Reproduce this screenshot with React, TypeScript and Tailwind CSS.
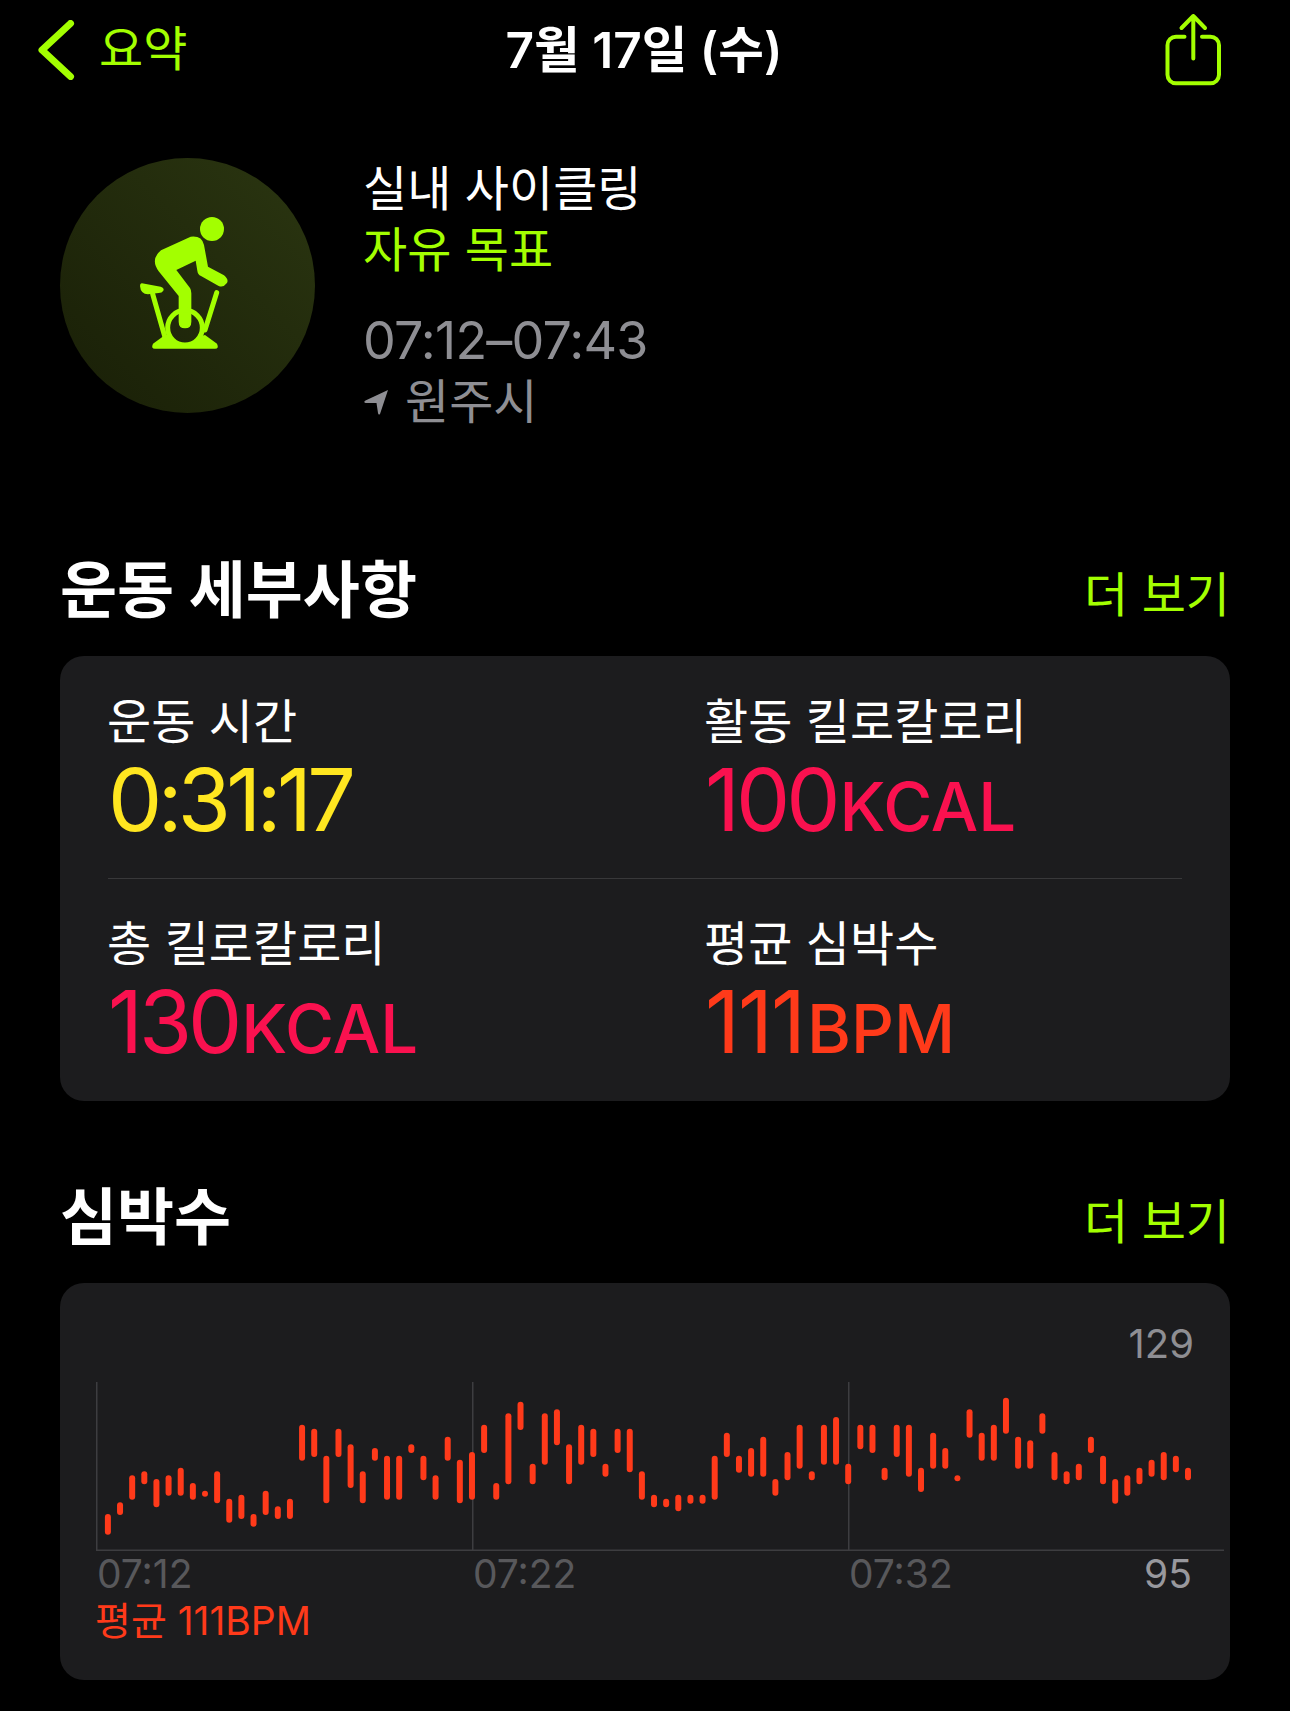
const FONT = 'font-["Inter","Noto_Sans_CJK_KR",sans-serif]';

// Heart-rate range per sample: [top, bottom] in thirds of a pixel, measured from y = 6px above the plot.
const samples: [number, number][] = [
  [402,464],[367,405],[286,359],[274,313],[297,382],[286,347],[263,347],[309,359],[332,347],[274,370],
  [356,428],[344,417],[402,440],[332,405],[379,417],[356,417],[134,242],[146,231],[227,370],[146,231],
  [193,324],[274,370],[204,242],[227,359],[227,359],[193,219],[227,301],[286,359],[170,242],[239,370],
  [216,359],[134,219],[309,359],[100,313],[65,150],[251,313],[100,254],[88,196],[193,313],[134,254],
  [146,231],[251,290],[146,219],[146,277],[274,359],[344,382],[356,382],[344,394],[344,371],[344,371],
  [227,359],[158,231],[227,278],[204,290],[170,290],[297,347],[216,301],[134,266],[274,301],[134,254],
  [111,254],[251,313],[134,208],[134,219],[263,301],[134,231],[134,290],[263,336],[158,266],[204,266],
  [286,301],[88,173],[158,242],[134,242],[53,161],[170,266],[181,266],[100,161],[216,301],[274,313],
  [251,301],[170,219],[227,313],[297,371],[286,347],[263,313],[239,290],[216,301],[227,277],[263,301],
];

function BackChevron() {
  return (
    <svg width="40" height="60" viewBox="0 0 40 60" fill="none" className="shrink-0">
      <path d="M33.5 3.5 L5 30 L33.5 56.5" stroke="#a3ff00" strokeWidth="7" strokeLinecap="round" strokeLinejoin="round" />
    </svg>
  );
}

function ShareIcon() {
  return (
    <svg width="60" height="80" viewBox="0 0 60 80" fill="none" className="shrink-0">
      <path d="M21.5 26.7 H13 a8.5 8.5 0 0 0 -8.5 8.5 V64.8 a8.5 8.5 0 0 0 8.5 8.5 H47.5 a8.5 8.5 0 0 0 8.5 -8.5 V35.2 a8.5 8.5 0 0 0 -8.5 -8.5 H39" stroke="#a3ff00" strokeWidth="4" strokeLinecap="round" />
      <path d="M30.3 48.5 V6 M18.5 18 L30.3 6 L42 18" stroke="#a3ff00" strokeWidth="4" strokeLinecap="round" strokeLinejoin="round" />
    </svg>
  );
}

function CyclistIcon() {
  return (
    <svg width="135" height="171" viewBox="0 0 405 513" fill="#a3ff00">
      <circle cx="276" cy="87" r="36" />
      <path d="M212 110 Q246 106 252 135 L264 200 L312 226 Q328 240 320 250 Q310 264 296 258 L243 228 Q233 223 232 212 L227 182 L169 210 L210 264 Q214 270 214 280 V365 Q214 385 195 385 Q176 385 176 365 V288 L116 214 Q90 178 123 151 Z" />
      <path d="M66 250 L122 260 Q134 264 130 272 Q126 279 116 279 L84 283 Q62 282 60 258 Q60 249 66 250 Z" />
      <path d="M98 282 L135 412 M290 278 L255 390" stroke="#a3ff00" strokeWidth="15" strokeLinecap="round" fill="none" />
      <circle cx="195" cy="383" r="52" stroke="#a3ff00" strokeWidth="15" fill="none" />
      <path d="M99 431 L135 405 L150 409 A52 52 0 0 0 240 409 L255 405 L291 431 Q298 446 285 446 H105 Q92 446 99 431 Z" />
    </svg>
  );
}

function LocationArrow() {
  return (
    <svg width="24" height="25" viewBox="0 0 24 25" fill="#8e8e93" className="shrink-0">
      <path d="M24 0 L16 24 Q14.5 25.5 14 23 L12.5 13 L1.5 13 Q-1 12 1.5 10.5 Z" />
    </svg>
  );
}

function Metric({ label, value, unit, color, tracking }: { label: string; value: string; unit?: string; color: string; tracking: string }) {
  return (
    <div className="flex flex-col">
      <div className="text-[48px] leading-[60px] text-white -ml-[1px]">{label}</div>
      <div className={`flex items-baseline mt-[3px] leading-[90px] ${color}`}>
        <span className={`text-[86px] ${tracking}`}>{value}</span>
        {unit && <span className="text-[67px] font-medium ml-[3px]">{unit}</span>}
      </div>
    </div>
  );
}

function SectionHeading({ title }: { title: string }) {
  return (
    <div className="flex items-center justify-between">
      <h2 className="text-[62px] leading-[80px] font-bold text-white">{title}</h2>
      <span className="text-[48px] leading-[80px] text-[#a3ff00] mt-[8px]">더 보기</span>
    </div>
  );
}

function HeartRateChart() {
  return (
    <svg width="1128" height="170" viewBox="0 0 1128 170" className="block">
      <path d="M0.75 0 V168 M376.75 0 V168 M752.75 0 V168 M0 168.25 H1128" stroke="#3d3d40" strokeWidth="1.5" fill="none" />
      {samples.map(([top, bottom], i) => {
        const y = top / 3 - 2;
        const h = Math.max((bottom - top) / 3, 6);
        return <rect key={i} x={8.9 + i * 12.136} y={y} width="6" height={h} rx="3" fill="#ff3a1a" />;
      })}
    </svg>
  );
}

export default function App() {
  return (
    <div className={`${FONT} w-[1290px] h-[1711px] bg-black overflow-hidden text-white`}>
      <nav className="h-[100px] flex items-center justify-between pl-[37px] pr-[67px]">
        <div className="flex items-center w-[228px] gap-[22px]">
          <BackChevron />
          <span className="text-[48px] leading-[60px] text-[#a3ff00] -mt-[2px]">요약</span>
        </div>
        <h1 className="text-[49.6px] leading-[60px] font-semibold">7월 17일 (수)</h1>
        <div className="w-[200px] flex justify-end">
          <ShareIcon />
        </div>
      </nav>

      <section className="flex ml-[60px] mt-[58px] gap-[48px]">
        <div className="w-[255px] h-[255px] rounded-full bg-gradient-to-tr from-[#191f07] to-[#2b3611] flex items-center justify-center shrink-0">
          <CyclistIcon />
        </div>
        <div className="flex flex-col pt-[1px]">
          <div className="text-[48px] leading-[60px]">실내 사이클링</div>
          <div className="text-[48px] leading-[62px] text-[#a3ff00]">자유 목표</div>
          <div className="text-[52px] leading-[60px] text-[#8e8e93] mt-[30px] tracking-[-0.8px]">07:12–07:43</div>
          <div className="flex items-center gap-[17px] text-[48px] leading-[60px] text-[#8e8e93] mt-[1px] pl-[1px]">
            <LocationArrow />
            <span>원주시</span>
          </div>
        </div>
      </section>

      <section className="mx-[60px] mt-[115px]">
        <SectionHeading title="운동 세부사항" />
        <div className="mt-[21px] h-[445px] bg-[#1c1c1e] rounded-[24px] px-[48px] pt-[36px]">
          <div className="grid grid-cols-[597px_1fr] pb-[26px] border-b border-[#38383a]">
            <Metric label="운동 시간" value="0:31:17" color="text-[#ffe620]" tracking="tracking-[-4.6px]" />
            <Metric label="활동 킬로칼로리" value="100" unit="KCAL" color="text-[#fa114f]" tracking="tracking-[-4px]" />
          </div>
          <div className="grid grid-cols-[597px_1fr] pt-[35px]">
            <Metric label="총 킬로칼로리" value="130" unit="KCAL" color="text-[#fa114f]" tracking="tracking-[-4px]" />
            <Metric label="평균 심박수" value="111" unit="BPM" color="text-[#ff3a1a]" tracking="tracking-[-2px]" />
          </div>
        </div>
      </section>

      <section className="mx-[60px] mt-[73px]">
        <SectionHeading title="심박수" />
        <div className="mt-[21px] h-[397px] bg-[#1c1c1e] rounded-[24px] pl-[36px] pr-[6px] pt-[31px]">
          <div className="text-[40px] leading-[60px] text-[#8e8e93] text-right pr-[30px] h-[60px]">129</div>
          <div className="mt-[8px]">
            <HeartRateChart />
          </div>
          <div className="flex text-[39px] leading-[44px] text-[#58585b] pl-[1px] pr-[32px]">
            <span className="w-[376px]">07:12</span>
            <span className="w-[376px]">07:22</span>
            <span>07:32</span>
            <span className="text-[#98989d] ml-auto">95</span>
          </div>
          <div className="text-[39px] leading-[46px] text-[#ff3a1a] mt-[2px] -ml-[1px]">평균 111BPM</div>
        </div>
      </section>
    </div>
  );
}
